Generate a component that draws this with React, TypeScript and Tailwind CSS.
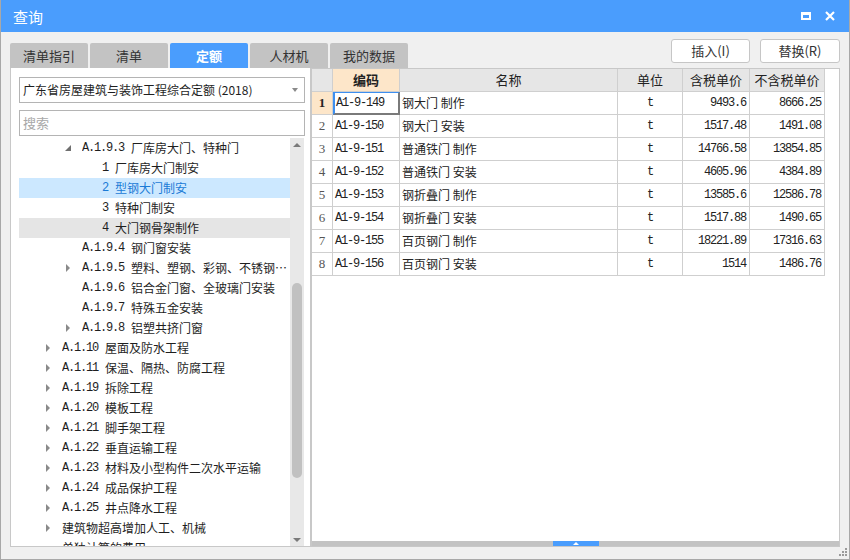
import React from "react";

const cjk = "font-['Noto_Sans_CJK_SC',sans-serif]";
const mono = "font-['Liberation_Mono','Noto_Sans_CJK_SC',monospace] text-[12px] tracking-[-1.2px]";

const tabs = ["清单指引", "清单", "定额", "人材机", "我的数据"];

type TreeNode = {
  level: 0 | 1 | 2;
  code?: string;
  text: string;
  arrow?: "open" | "closed";
  state?: "selected" | "hover";
};

const tree: TreeNode[] = [
  { level: 1, code: "A.1.9.3", text: "厂库房大门、特种门", arrow: "open" },
  { level: 2, code: "1", text: "厂库房大门制安" },
  { level: 2, code: "2", text: "型钢大门制安", state: "selected" },
  { level: 2, code: "3", text: "特种门制安" },
  { level: 2, code: "4", text: "大门钢骨架制作", state: "hover" },
  { level: 1, code: "A.1.9.4", text: "钢门窗安装" },
  { level: 1, code: "A.1.9.5", text: "塑料、塑钢、彩钢、不锈钢门窗", arrow: "closed" },
  { level: 1, code: "A.1.9.6", text: "铝合金门窗、全玻璃门安装" },
  { level: 1, code: "A.1.9.7", text: "特殊五金安装" },
  { level: 1, code: "A.1.9.8", text: "铝塑共挤门窗", arrow: "closed" },
  { level: 0, code: "A.1.10", text: "屋面及防水工程", arrow: "closed" },
  { level: 0, code: "A.1.11", text: "保温、隔热、防腐工程", arrow: "closed" },
  { level: 0, code: "A.1.19", text: "拆除工程", arrow: "closed" },
  { level: 0, code: "A.1.20", text: "模板工程", arrow: "closed" },
  { level: 0, code: "A.1.21", text: "脚手架工程", arrow: "closed" },
  { level: 0, code: "A.1.22", text: "垂直运输工程", arrow: "closed" },
  { level: 0, code: "A.1.23", text: "材料及小型构件二次水平运输", arrow: "closed" },
  { level: 0, code: "A.1.24", text: "成品保护工程", arrow: "closed" },
  { level: 0, code: "A.1.25", text: "井点降水工程", arrow: "closed" },
  { level: 0, text: "建筑物超高增加人工、机械", arrow: "closed" },
  { level: 0, text: "单独计算的费用" },
];

const indent = { 0: "pl-[21px]", 1: "pl-[41px]", 2: "pl-[61px]" };

const rows = [
  ["A1-9-149", "钢大门 制作", "9493.6", "8666.25"],
  ["A1-9-150", "钢大门 安装", "1517.48", "1491.08"],
  ["A1-9-151", "普通铁门 制作", "14766.58", "13854.85"],
  ["A1-9-152", "普通铁门 安装", "4605.96", "4384.89"],
  ["A1-9-153", "钢折叠门 制作", "13585.6", "12586.78"],
  ["A1-9-154", "钢折叠门 安装", "1517.88", "1490.65"],
  ["A1-9-155", "百页钢门 制作", "18221.89", "17316.63"],
  ["A1-9-156", "百页钢门 安装", "1514", "1486.76"],
];

function Arrow({ kind }: { kind?: "open" | "closed" }) {
  if (kind === "open")
    return (
      <svg width="6" height="6" viewBox="0 0 6 6">
        <path d="M6 0 L6 6 L0 6 Z" fill="#6f6f6f" />
      </svg>
    );
  if (kind === "closed")
    return (
      <svg width="4" height="8" viewBox="0 0 4 8">
        <path d="M0 0 L4 4 L0 8 Z" fill="#8a8a8a" />
      </svg>
    );
  return null;
}

function TreeRow({ node }: { node: TreeNode }) {
  const bg =
    node.state === "selected" ? "bg-[#cce8ff]" : node.state === "hover" ? "bg-[#e5e5e5]" : "";
  const color = node.state === "selected" ? "text-[#1a7ad6]" : "text-[#1e1e1e]";
  return (
    <div className={`flex items-center h-[20px] shrink-0 whitespace-nowrap ${indent[node.level]} ${bg} ${color}`}>
      <div className="w-[16px] flex justify-center items-center shrink-0">
        <Arrow kind={node.arrow} />
      </div>
      <div className="ml-[6px] flex items-center min-w-0 overflow-hidden">
        {node.code && <span className={`${mono} mr-[7px] shrink-0`}>{node.code}</span>}
        <span className={`${cjk} text-[12px] leading-[20px] truncate`}>{node.text}</span>
      </div>
    </div>
  );
}

export default function App() {
  return (
    <div className={`relative w-[850px] h-[560px] bg-[#f0f0f0] border-x border-b border-[#a8a8a8] flex flex-col ${cjk}`}>
      {/* title bar */}
      <div className="h-[32px] shrink-0 bg-[#4a9dfd] flex items-center justify-between pl-[12px] pr-[14px]">
        <span className="text-white text-[15px] leading-none">查询</span>
        <div className="flex items-center gap-[14px]">
          <div className="w-[10px] h-[8px] border-2 border-t-[3px] border-white" />
          <svg width="10" height="10" viewBox="0 0 10 10">
            <path d="M1 1 L9 9 M9 1 L1 9" stroke="white" strokeWidth="2.2" />
          </svg>
        </div>
      </div>

      {/* tabs + actions */}
      <div className="h-[36px] shrink-0 flex justify-between px-[9px]">
        <div className="flex items-end gap-[2px]">
          {tabs.map((t) => (
            <div
              key={t}
              className={`w-[78px] h-[25px] rounded-t-[2px] flex items-center justify-center text-[13px] ${
                t === "定额" ? "bg-[#4a9dfd] text-white font-bold" : "bg-[#c3c3c3] text-[#333]"
              }`}
            >
              {t}
            </div>
          ))}
        </div>
        <div className="flex gap-[10px] mt-[7px] self-start">
          <button className="w-[79px] h-[24px] bg-white border border-[#c6c6c6] rounded-[3px] text-[13px] text-[#333]">
            插入(I)
          </button>
          <button className="w-[80px] h-[24px] bg-white border border-[#c6c6c6] rounded-[3px] text-[13px] text-[#333]">
            替换(R)
          </button>
        </div>
      </div>

      {/* panels */}
      <div className="h-[479px] shrink-0 flex mx-[9px]">
        {/* left */}
        <div className="w-[301px] bg-white border-l border-r border-b border-[#c8c8c8] flex flex-col pl-[8px] pr-[5px]">
          <div className="mt-[9px] h-[26px] border border-[#b4b4b4] flex items-center justify-between pl-[3px] pr-[6px]">
            <span className="text-[12px] text-[#1e1e1e] whitespace-nowrap">广东省房屋建筑与装饰工程综合定额 (2018)</span>
            <svg width="6" height="4" viewBox="0 0 6 4">
              <path d="M0 0 L6 0 L3 4 Z" fill="#8a8a8a" />
            </svg>
          </div>
          <div className="mt-[7px] h-[26px] border border-[#b4b4b4] flex items-center pl-[3px]">
            <span className="text-[13px] text-[#a8a8a8]">搜索</span>
          </div>
          <div className="mt-[2px] flex-1 min-h-0 flex">
            <div className="w-[271px] flex flex-col overflow-hidden">
              {tree.map((n, i) => (
                <TreeRow key={i} node={n} />
              ))}
            </div>
            <div className="w-[14px] bg-[#e8e8e8] flex flex-col items-center">
              <div className="h-[14px] flex items-center justify-center shrink-0">
                <svg width="8" height="4" viewBox="0 0 8 4">
                  <path d="M0 4 L4 0 L8 4 Z" fill="#7a7a7a" />
                </svg>
              </div>
              <div className="h-[131px] shrink-0" />
              <div className="w-[10px] h-[195px] rounded-full bg-[#c1c1c1] shrink-0" />
              <div className="flex-1" />
              <div className="h-[12px] flex items-center justify-center shrink-0">
                <svg width="8" height="4" viewBox="0 0 8 4">
                  <path d="M0 0 L8 0 L4 4 Z" fill="#7a7a7a" />
                </svg>
              </div>
            </div>
          </div>
        </div>

        {/* right */}
        <div className="flex-1 bg-white border border-[#c8c8c8] flex flex-col">
          <div className="grid grid-cols-[21px_67px_218px_65px_67px_75px] w-[513px] text-[#222]">
            <div className="h-[23px] bg-[#e6e6e6] border-r border-b border-[#cfcfcf]" />
            <div className="h-[23px] bg-[#fde6c9] border-r border-b border-[#cfcfcf] flex items-center justify-center text-[13px] font-bold">编码</div>
            <div className="h-[23px] bg-[#e6e6e6] border-r border-b border-[#cfcfcf] flex items-center justify-center text-[13px]">名称</div>
            <div className="h-[23px] bg-[#e6e6e6] border-r border-b border-[#cfcfcf] flex items-center justify-center text-[13px]">单位</div>
            <div className="h-[23px] bg-[#e6e6e6] border-r border-b border-[#cfcfcf] flex items-center justify-center text-[13px]">含税单价</div>
            <div className="h-[23px] bg-[#e6e6e6] border-r border-b border-[#cfcfcf] flex items-center justify-center text-[13px]">不含税单价</div>
            {rows.map((r, i) => (
              <React.Fragment key={r[0]}>
                <div
                  className={`h-[23px] border-r border-b border-[#cfcfcf] flex items-center justify-center font-['Liberation_Serif',serif] text-[13px] ${
                    i === 0 ? "bg-[#fde6c9] font-bold text-[#222]" : "text-[#555]"
                  }`}
                >
                  {i + 1}
                </div>
                <div
                  className={`h-[23px] flex items-center pl-[1px] ${mono} ${
                    i === 0
                      ? "border-l-2 border-t border-r-2 border-b-2 border-l-[#3d8ff0] border-t-[#3d8ff0] border-r-[#7a7a7a] border-b-[#7a7a7a]"
                      : "border-r border-b border-[#cfcfcf] pl-[2px]"
                  }`}
                >
                  {r[0]}
                </div>
                <div className="h-[23px] border-r border-b border-[#cfcfcf] flex items-center pl-[2px] text-[12px]">{r[1]}</div>
                <div className={`h-[23px] border-r border-b border-[#cfcfcf] flex items-center justify-center ${mono}`}>t</div>
                <div className={`h-[23px] border-r border-b border-[#cfcfcf] flex items-center justify-end pr-[3px] ${mono}`}>{r[2]}</div>
                <div className={`h-[23px] border-r border-b border-[#cfcfcf] flex items-center justify-end pr-[3px] ${mono}`}>{r[3]}</div>
              </React.Fragment>
            ))}
          </div>
          <div className="flex-1" />
          <div className="h-[5px] bg-[#c3c3c3] flex justify-center">
            <div className="w-[46px] h-[5px] bg-[#4a9dfd] flex items-center justify-center">
              <svg width="6" height="3" viewBox="0 0 6 3">
                <path d="M0 3 L3 0 L6 3 Z" fill="white" />
              </svg>
            </div>
          </div>
        </div>
      </div>

      {/* resize grip */}
      <div className="absolute right-[2px] bottom-[3px] grid grid-cols-3 gap-[1px]">
        <span className="w-[2px] h-[2px]" />
        <span className="w-[2px] h-[2px]" />
        <span className="w-[2px] h-[2px] bg-[#9a9a9a]" />
        <span className="w-[2px] h-[2px]" />
        <span className="w-[2px] h-[2px] bg-[#9a9a9a]" />
        <span className="w-[2px] h-[2px] bg-[#9a9a9a]" />
        <span className="w-[2px] h-[2px] bg-[#9a9a9a]" />
        <span className="w-[2px] h-[2px] bg-[#9a9a9a]" />
        <span className="w-[2px] h-[2px] bg-[#9a9a9a]" />
      </div>
    </div>
  );
}
